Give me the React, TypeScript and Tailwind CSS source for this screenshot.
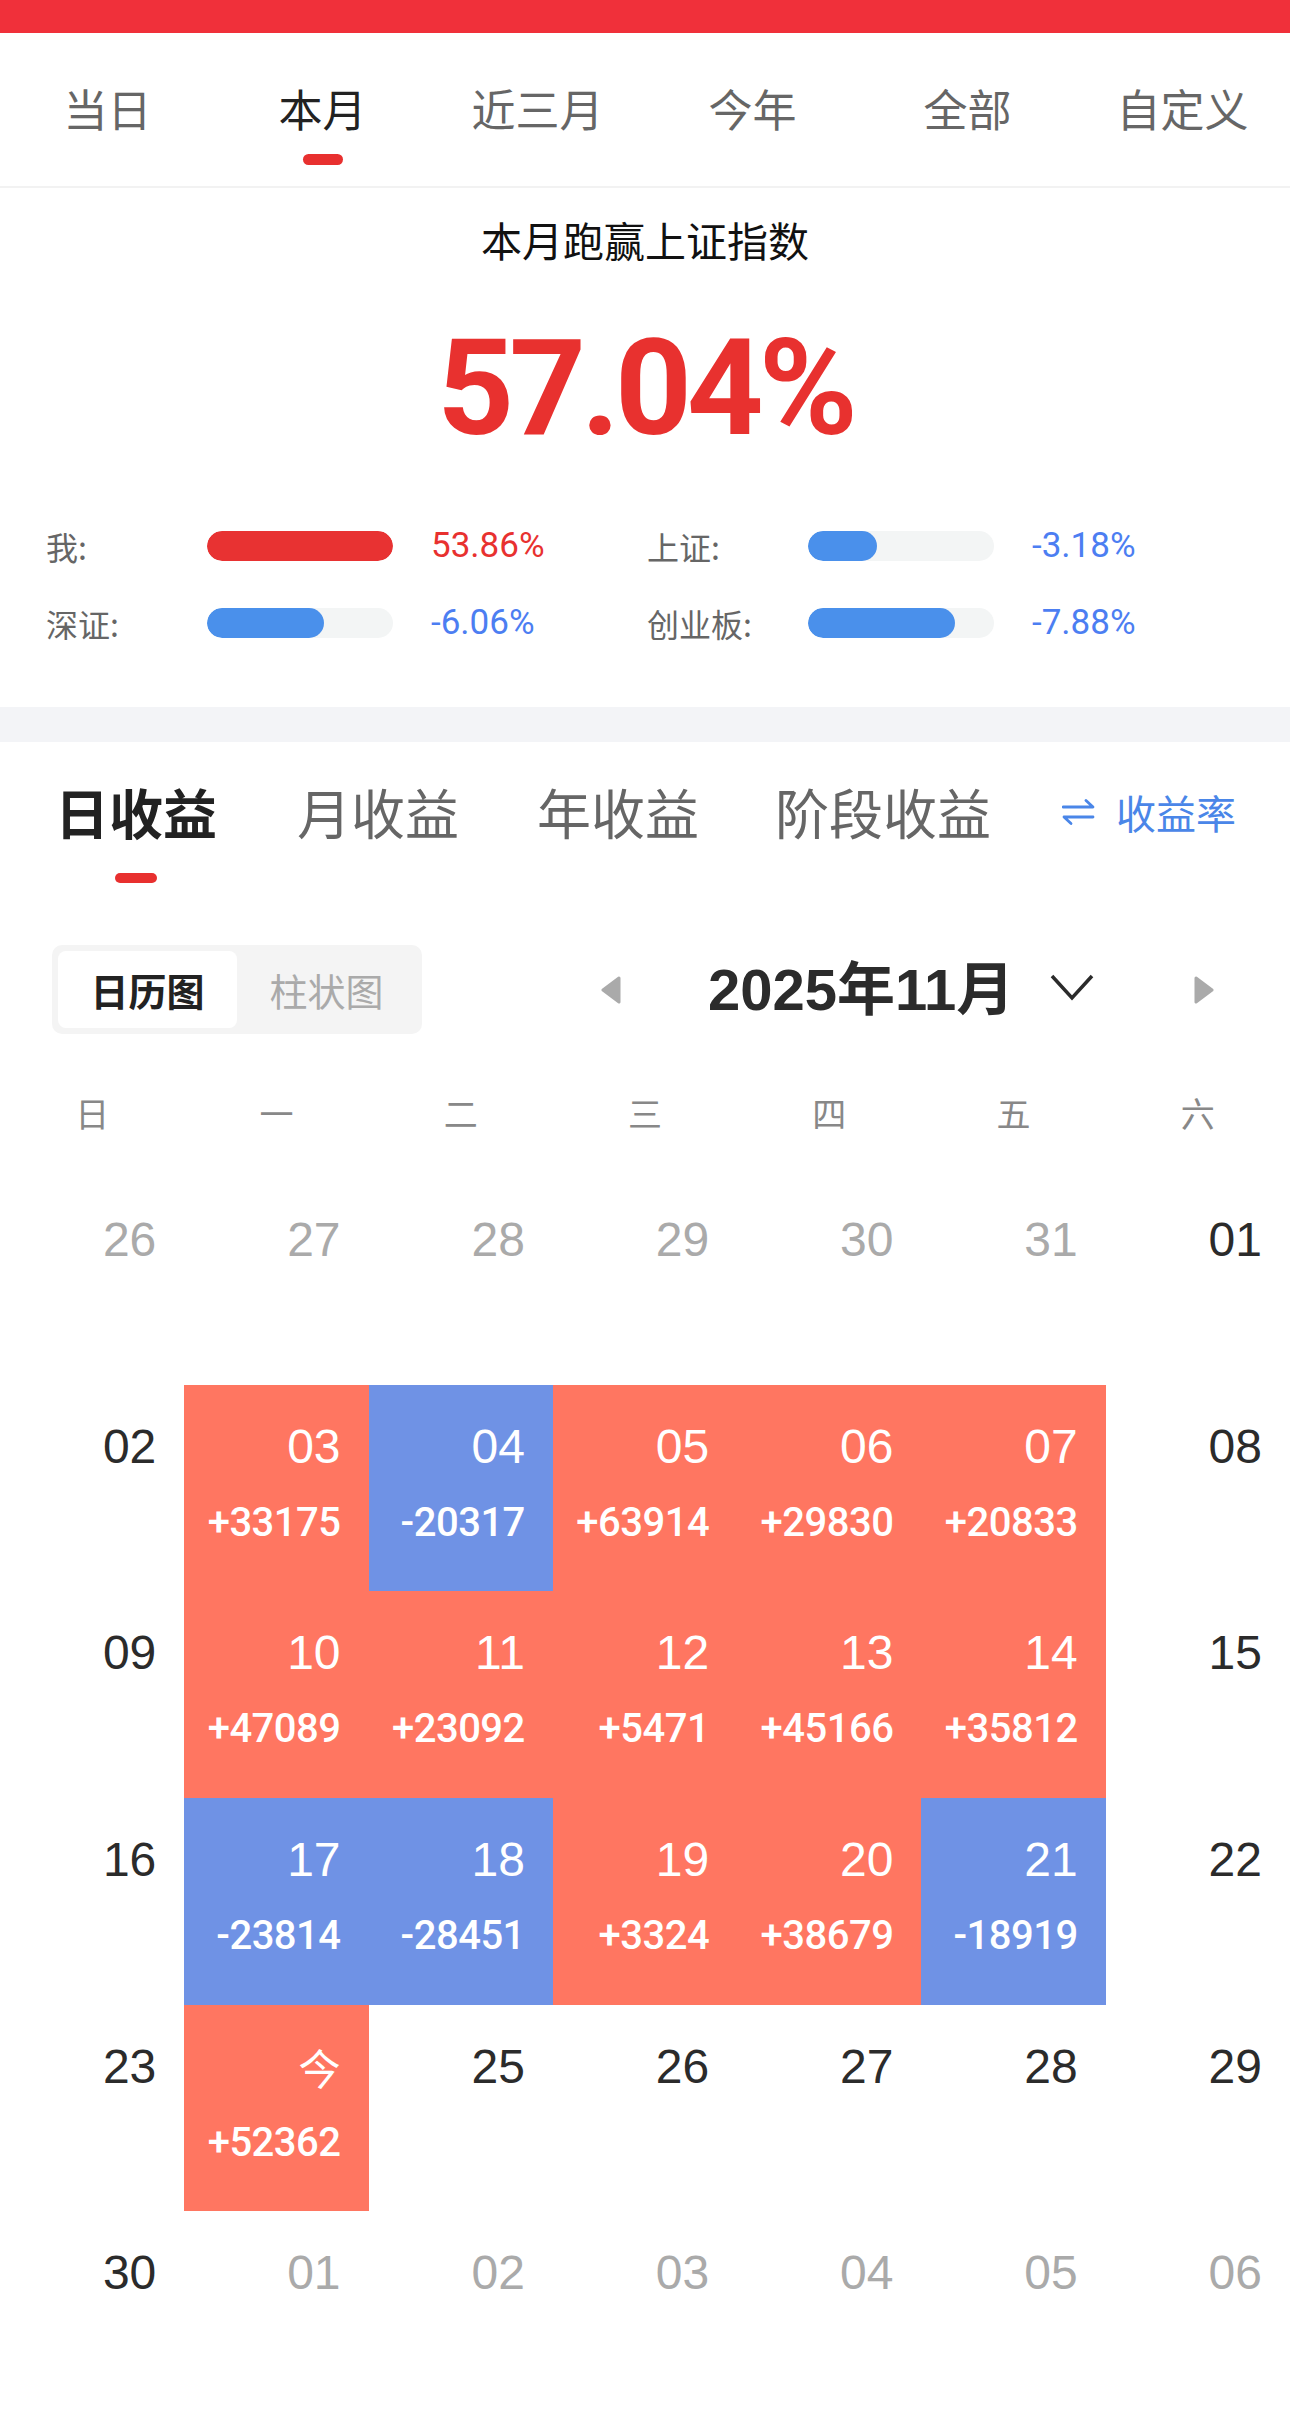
const cjk = "font-['Noto_Sans_CJK_SC',sans-serif]"

const periods = ["当日", "本月", "近三月", "今年", "全部", "自定义"]

const stats = [
  { label: "我:", pct: 100, value: "53.86%", red: true },
  { label: "上证:", pct: 37, value: "-3.18%", red: false },
  { label: "深证:", pct: 63, value: "-6.06%", red: false },
  { label: "创业板:", pct: 79, value: "-7.88%", red: false },
]

type Day = { d: string; v?: string; up?: boolean; muted?: boolean }

const weeks: Day[][] = [
  [
    { d: "26", muted: true },
    { d: "27", muted: true },
    { d: "28", muted: true },
    { d: "29", muted: true },
    { d: "30", muted: true },
    { d: "31", muted: true },
    { d: "01" },
  ],
  [
    { d: "02" },
    { d: "03", v: "+33175", up: true },
    { d: "04", v: "-20317", up: false },
    { d: "05", v: "+63914", up: true },
    { d: "06", v: "+29830", up: true },
    { d: "07", v: "+20833", up: true },
    { d: "08" },
  ],
  [
    { d: "09" },
    { d: "10", v: "+47089", up: true },
    { d: "11", v: "+23092", up: true },
    { d: "12", v: "+5471", up: true },
    { d: "13", v: "+45166", up: true },
    { d: "14", v: "+35812", up: true },
    { d: "15" },
  ],
  [
    { d: "16" },
    { d: "17", v: "-23814", up: false },
    { d: "18", v: "-28451", up: false },
    { d: "19", v: "+3324", up: true },
    { d: "20", v: "+38679", up: true },
    { d: "21", v: "-18919", up: false },
    { d: "22" },
  ],
  [
    { d: "23" },
    { d: "今", v: "+52362", up: true },
    { d: "25" },
    { d: "26" },
    { d: "27" },
    { d: "28" },
    { d: "29" },
  ],
  [
    { d: "30" },
    { d: "01", muted: true },
    { d: "02", muted: true },
    { d: "03", muted: true },
    { d: "04", muted: true },
    { d: "05", muted: true },
    { d: "06", muted: true },
  ],
]

function Triangle({ left }: { left?: boolean }) {
  return (
    <svg width="22" height="28" viewBox="0 0 22 28">
      <path
        d={left ? "M19 2 L3 14 L19 26 Z" : "M3 2 L19 14 L3 26 Z"}
        fill="#aaaaaa"
        stroke="#aaaaaa"
        strokeWidth="3"
        strokeLinejoin="round"
      />
    </svg>
  )
}

function DayCell({ day }: { day: Day }) {
  const bg = day.v ? (day.up ? "bg-[#ff7661]" : "bg-[#6f92e5]") : ""
  const color = day.v ? "text-white" : day.muted ? "text-[#aaaaaa]" : "text-[#2b2b2b]"
  const isToday = day.d === "今"
  return (
    <div className={`flex flex-col items-end pr-[28px] ${bg}`}>
      <div
        className={`mt-[38px] leading-[48px] ${color} ${
          isToday ? `text-[42px] ${cjk}` : "text-[48px] font-['Liberation_Sans',sans-serif]"
        }`}
      >
        {day.d}
      </div>
      {day.v && (
        <div className="mt-[32px] text-[40px] leading-[40px] font-medium text-white font-['Roboto',sans-serif] tracking-[-0.5px]">
          {day.v}
        </div>
      )}
    </div>
  )
}

export default function App() {
  return (
    <div className="w-[1290px] bg-white">
      <div className="h-[33px] bg-[#f0303a]" />

      {/* period tabs */}
      <div className={`grid grid-cols-6 h-[155px] border-b-2 border-[#f2f2f2] ${cjk}`}>
        {periods.map((p, i) => (
          <div key={p} className="flex flex-col items-center pt-[53px]">
            <div className={`text-[44px] leading-[44px] ${i === 1 ? "text-[#222222]" : "text-[#666666]"}`}>{p}</div>
            {i === 1 && <div className="mt-[24px] w-[40px] h-[11px] rounded-full bg-[#e8302f]" />}
          </div>
        ))}
      </div>

      {/* summary */}
      <div className="flex flex-col items-center pt-[30px] pb-[69px]">
        <div className={`text-[41px] leading-[42px] text-[#111111] ${cjk}`}>本月跑赢上证指数</div>
        <div className="mt-[62px] text-[134px] leading-[134px] font-bold tracking-[-5px] text-[#e8312f] font-['Roboto',sans-serif]">
          57.04%
        </div>
        <div className="mt-[75px] w-full pl-[46px] grid grid-cols-[601px_1fr] gap-y-[47px]">
          {stats.map((s) => (
            <div key={s.label} className="flex items-center h-[30px]">
              <div className={`w-[161px] text-[32px] text-[#666666] ${cjk}`}>{s.label}</div>
              <div className="w-[186px] h-[30px] rounded-full bg-[#f3f5f5] overflow-hidden">
                <div
                  className={`h-full rounded-full ${s.red ? "bg-[#e83232]" : "bg-[#4a90eb]"}`}
                  style={{ width: `${s.pct}%` }}
                />
              </div>
              <div
                className={`ml-[38px] text-[35px] font-['Roboto',sans-serif] ${
                  s.red ? "text-[#e8312f]" : "text-[#4c7ef2]"
                }`}
              >
                {s.value}
              </div>
            </div>
          ))}
        </div>
      </div>

      <div className="h-[35px] bg-[#f3f4f7]" />

      {/* earnings tabs */}
      <div className={`flex items-start pl-[55px] pr-[54px] pt-[43px] ${cjk}`}>
        <div className="flex flex-col items-center">
          <div className="text-[54px] leading-[54px] font-bold text-[#222222]">日收益</div>
          <div className="mt-[34px] w-[42px] h-[10px] rounded-full bg-[#e8302f]" />
        </div>
        <div className="ml-[80px] text-[54px] leading-[54px] text-[#666666]">月收益</div>
        <div className="ml-[78px] text-[54px] leading-[54px] text-[#666666]">年收益</div>
        <div className="ml-[76px] text-[54px] leading-[54px] text-[#666666]">阶段收益</div>
        <div className="ml-auto flex items-center h-[54px] text-[40px] text-[#4a86e8]">
          <svg width="33" height="27" viewBox="0 0 33 27" className="mr-[21px]">
            <path d="M1 8 H31 L24 1.5" fill="none" stroke="#4a86e8" strokeWidth="2.8" strokeLinecap="round" strokeLinejoin="round" />
            <path d="M31 18 H2 L9 24.5" fill="none" stroke="#4a86e8" strokeWidth="2.8" strokeLinecap="round" strokeLinejoin="round" />
          </svg>
          收益率
        </div>
      </div>

      {/* toggle + month */}
      <div className="mt-[62px] flex items-center pl-[52px]">
        <div className={`flex w-[370px] h-[89px] p-[6px] rounded-[10px] bg-[#f4f4f4] ${cjk}`}>
          <div className="flex-1 flex items-center justify-center rounded-[8px] bg-white text-[38px] font-bold text-[#222222]">
            日历图
          </div>
          <div className="flex-1 flex items-center justify-center text-[38px] text-[#aaaaaa]">柱状图</div>
        </div>
        <div className="ml-[178px]">
          <Triangle left />
        </div>
        <div className="ml-[86px] text-[58px] leading-[60px] font-bold text-[#2b2b2b] font-['Liberation_Sans','Noto_Sans_CJK_SC',sans-serif]">
          2025年11月
        </div>
        <svg width="44" height="27" viewBox="0 0 44 27" className="ml-[36px] -mt-[4px]">
          <path d="M2 2 L22 24 L42 2" fill="none" stroke="#2b2b2b" strokeWidth="3.5" />
        </svg>
        <div className="ml-[99px]">
          <Triangle />
        </div>
      </div>

      {/* weekdays */}
      <div className={`mt-[62px] grid grid-cols-7 text-center text-[34px] leading-[34px] text-[#888888] ${cjk}`}>
        {["日", "一", "二", "三", "四", "五", "六"].map((w) => (
          <div key={w}>{w}</div>
        ))}
      </div>

      {/* calendar */}
      <div className="mt-[48px] grid grid-cols-7 auto-rows-[206.67px]">
        {weeks.flat().map((day, i) => (
          <DayCell key={i} day={day} />
        ))}
      </div>
    </div>
  )
}
